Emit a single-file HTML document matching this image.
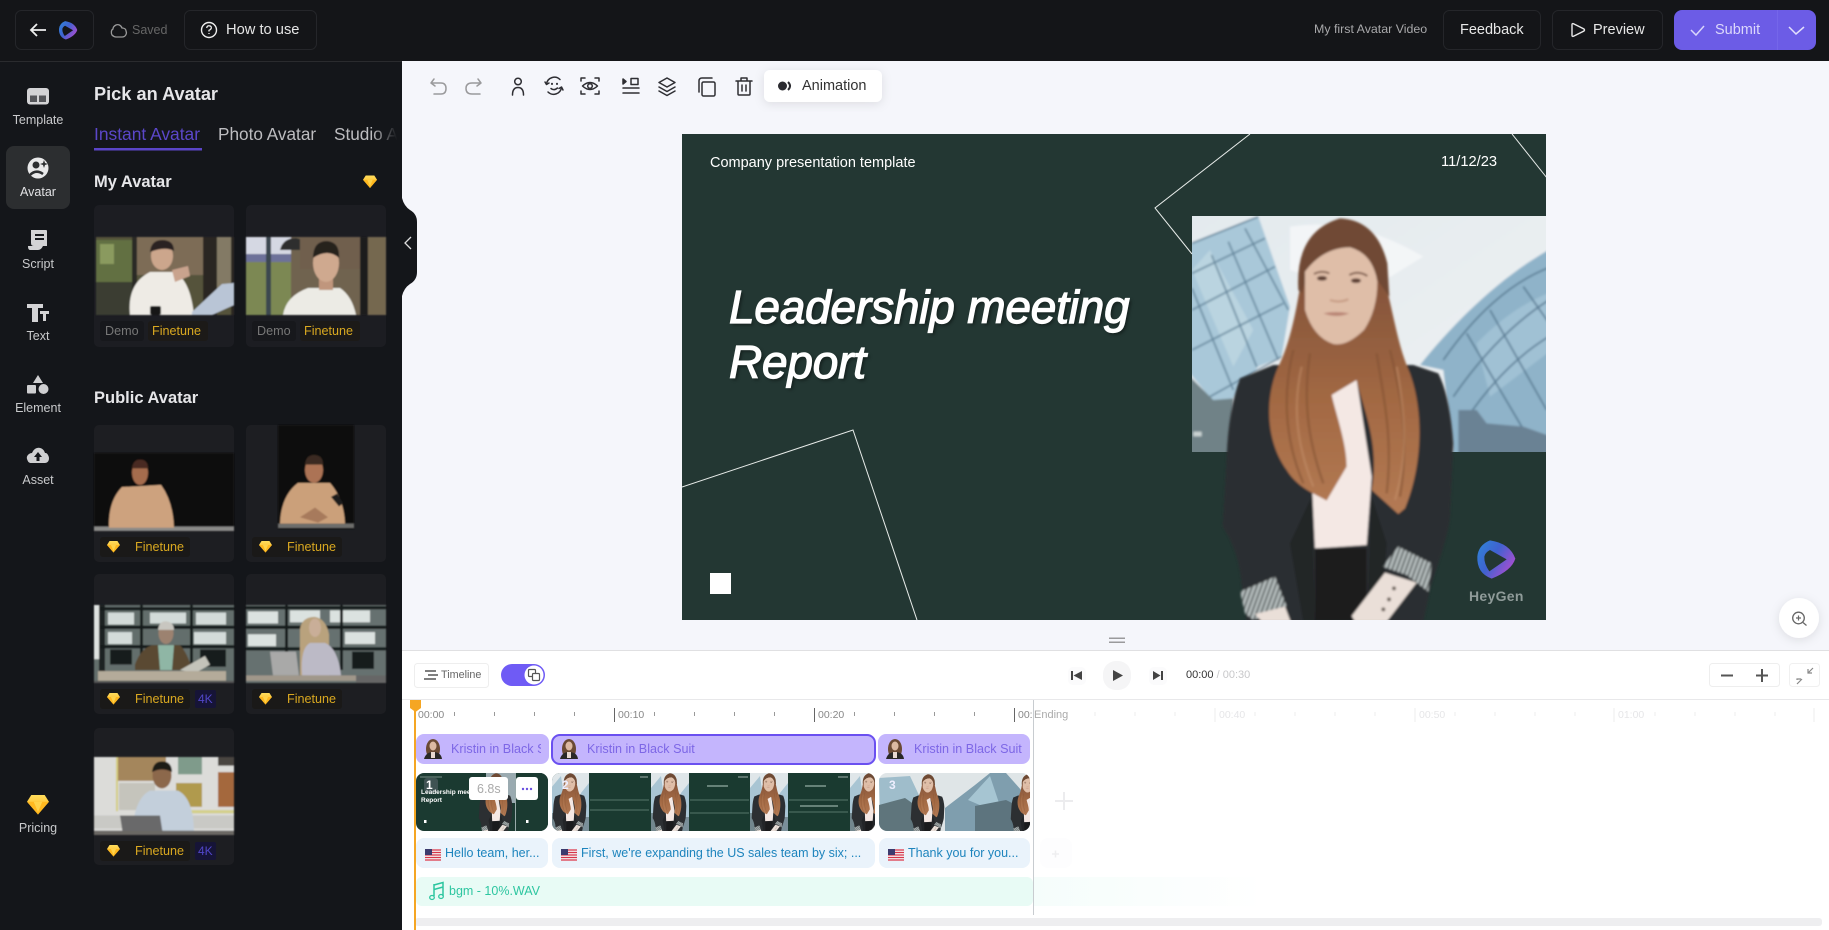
<!DOCTYPE html>
<html lang="en"><head><meta charset="utf-8"><title>Avatar Video Editor</title>
<style>
html,body{margin:0;padding:0;width:1829px;height:930px;overflow:hidden;background:#fff}
body{position:relative;font-family:"Liberation Sans",Arial,sans-serif}
svg.bg{position:absolute;left:0;top:0}
.t{position:absolute;white-space:nowrap;line-height:20px;height:20px}
.nav{width:76px;left:0;text-align:center;font-size:12.5px;color:#c9cacc}
.fin{font-size:12.6px;color:#d9a820}
.h{font-weight:700;color:#e6e6e9;font-size:16.5px}
.kr{font-size:12.6px;color:#7d67e6}
.sc{font-size:12.5px;color:#1d84bd}
.rl{font-size:10.5px;color:#888}
.rf{font-size:10.5px;color:#e6e6e8}
</style></head><body>
<svg class="bg" width="1829" height="930" viewBox="0 0 1829 930" xmlns="http://www.w3.org/2000/svg">
<defs>
<linearGradient id="lg" x1="0" y1="0" x2="1" y2=".6"><stop offset="0" stop-color="#2f86d8"/><stop offset=".5" stop-color="#3f62d0"/><stop offset="1" stop-color="#a64fd0"/></linearGradient>
<linearGradient id="hr" x1="0" y1="0" x2="0" y2="1"><stop offset="0" stop-color="#83533a"/><stop offset=".55" stop-color="#a46a44"/><stop offset="1" stop-color="#b37a54"/></linearGradient>
<linearGradient id="sky" x1="0" y1="0" x2="1" y2="1"><stop offset="0" stop-color="#e3eaee"/><stop offset="1" stop-color="#eef1f3"/></linearGradient>
<linearGradient id="gt" x1="0" y1="0" x2="0" y2="1"><stop offset="0" stop-color="#ffdd5c"/><stop offset="1" stop-color="#ffad14"/></linearGradient>
<linearGradient id="bgf" x1="0" y1="0" x2="1" y2="0"><stop offset="0" stop-color="#f5fdfb"/><stop offset="1" stop-color="#ffffff"/></linearGradient>
<filter id="b" x="-5%" y="-5%" width="110%" height="110%"><feGaussianBlur stdDeviation="0.9"/></filter>
<filter id="b3" x="-5%" y="-5%" width="110%" height="110%"><feGaussianBlur stdDeviation="3"/></filter>
<filter id="sh" x="-30%" y="-30%" width="160%" height="160%"><feDropShadow dx="0" dy="2" stdDeviation="5" flood-color="#000" flood-opacity=".1"/></filter>
<g id="gem"><path d="M3.5 0H14.5L18 5.5L9 16L0 5.5Z" fill="url(#gt)"/><path d="M0 5.5H18L9 16Z" fill="#ffb81f"/><path d="M5.5 5.5H12.5L9 14Z" fill="#ffd34a"/></g>
<g id="logo"><path fill-rule="evenodd" fill="url(#lg)" d="M900 991Q960 1000 976 1046Q965 1082 905 1106Q860 1090 862 1040Q865 1005 900 991ZM900 1020L950 1048L898 1084Q882 1062 883 1040Q885 1028 900 1020Z"/></g>
<pattern id="st" width="13" height="10" patternUnits="userSpaceOnUse" patternTransform="rotate(20)"><rect width="13" height="10" fill="#bcc4c4"/><rect width="5" height="10" fill="#4a4f50"/></pattern>
<g id="kw">
 <path d="M250 465L150 505Q115 600 110 740L98 950Q150 1030 155 1130L170 1235H700L722 1130Q780 960 780 920L790 700Q780 560 745 490L670 465Z" fill="#2c2f32"/>
 <path d="M430 520L500 510L545 800L530 1005L375 1015L365 800Z" fill="#f4e8e4"/>
 <path d="M375 1015H530V1235H375Z" fill="#1a1b1d"/>
 <path d="M365 860L375 1235H340L300 1000Z" fill="#232528"/><path d="M545 860L530 1235H570L590 1000Z" fill="#232528"/>
 <path d="M335 200C320 300 300 400 265 470C225 560 225 690 290 780C320 830 370 850 410 872L470 770C470 700 440 620 425 555L500 510C520 600 570 700 545 840L625 912L645 895C700 760 700 600 660 490C620 400 610 300 580 200Z" fill="url(#hr)"/>
 <g fill="none" stroke="#7d4e30" stroke-width="7" opacity=".55">
  <path d="M310 420C280 540 280 680 340 820M360 430C340 560 350 680 400 820M600 420C630 540 660 680 630 860M560 430C580 560 610 680 590 850"/>
 </g>
 <g fill="none" stroke="#c99670" stroke-width="6" opacity=".5">
  <path d="M335 470C310 580 315 690 370 830M620 470C640 590 660 720 615 870"/>
 </g>
 <path d="M325 240Q315 65 450 25Q560 30 592 160L598 260L562 210Q540 130 480 112Q420 115 360 170L335 250Z" fill="#6f4a34"/>
 <path d="M345 185Q400 112 480 112Q548 130 562 215Q562 300 522 360Q470 410 430 402Q370 382 345 300Z" fill="#dfbea8"/>
 <path d="M372 192Q395 180 418 190" stroke="#6a4634" stroke-width="5" fill="none"/><path d="M478 195Q505 180 532 198" stroke="#6a4634" stroke-width="5" fill="none"/>
 <ellipse cx="396" cy="205" rx="15" ry="7" fill="#5b3d30"/><ellipse cx="498" cy="212" rx="15" ry="7" fill="#5b3d30"/>
 <path d="M420 270Q445 280 475 268" stroke="#c59a82" stroke-width="6" fill="none"/>
 <path d="M400 310Q437 303 478 310Q440 325 400 310Z" fill="#b98474"/>
 <path d="M578 1070L625 1010L725 1060L715 1145L650 1095Z" fill="url(#st)"/>
 <path d="M150 1145L255 1100L290 1190L190 1230L165 1210Z" fill="url(#st)"/>
 <path d="M485 1218L585 1088L680 1118L590 1235H495Z" fill="#eadfd8"/>
 <path d="M195 1212L285 1190L302 1235H215Z" fill="#eadfd8"/>
 <circle cx="612" cy="1135" r="6" fill="#6b6058"/><circle cx="597" cy="1168" r="6" fill="#6b6058"/><circle cx="580" cy="1198" r="6" fill="#6b6058"/>
</g>
<g id="wf"><rect width="38" height="58" fill="#dfe6e9"/><path d="M0 15L10 3L14 30L0 45Z" fill="#a9c5d3"/><path d="M38 10V45L26 40L30 20Z" fill="#aac6d5"/><rect y="40" width="10" height="18" fill="#73878e"/><rect x="30" y="44" width="8" height="14" fill="#7a8f99"/><use href="#kw" transform="translate(-3 -1) scale(.0485)"/></g>
<clipPath id="c1"><rect x="416" y="773" width="132" height="58" rx="8"/></clipPath>
<clipPath id="c2"><rect x="552" y="773" width="323" height="58" rx="8"/></clipPath>
<clipPath id="c3"><rect x="879" y="773" width="151" height="58" rx="8"/></clipPath>
<clipPath id="ph"><rect x="6" y="18" width="1065" height="708"/></clipPath>
<clipPath id="sl"><rect x="682" y="134" width="864" height="486"/></clipPath>
</defs>

<!-- frame -->
<rect width="1829" height="930" fill="#fff"/>
<rect x="402" y="61" width="1427" height="589" fill="#f5f6fb"/>
<rect width="1829" height="61" fill="#141518"/>
<rect y="61" width="402" height="869" fill="#14161a"/>
<rect y="61" width="402" height="1" fill="#2a2b2e"/>

<!-- header -->
<rect x="15.500" y="10.500" width="78" height="39" rx="6" fill="none" stroke="#25262a"/>
<path d="M46 30H31M37 24L31 30L37 36" fill="none" stroke="#eee" stroke-width="1.800"/>
<use href="#logo" transform="translate(59 21) scale(.16) translate(-862 -990)"/>
<path d="M116 37H122C126 37 127 33 126 31C126 29 124 28 122 28C121 25 118 24 116 25C114 26 113 27 113 29C111 30 111 33 112 35C113 36 114 37 116 37Z" fill="none" stroke="#999" stroke-width="1.300"/>
<rect x="184.500" y="10.500" width="132" height="39" rx="6" fill="none" stroke="#25262a"/>
<circle cx="209" cy="30" r="7.500" fill="none" stroke="#eee" stroke-width="1.400"/>
<path d="M206.700 28Q207 25.500 209.300 25.800Q211.500 26 211.300 28Q211 29.500 209 30.300V31.500M209 33V34" fill="none" stroke="#eee" stroke-width="1.300"/>
<rect x="1443.500" y="10.500" width="97" height="39" rx="6" fill="none" stroke="#25262a"/>
<rect x="1552.500" y="10.500" width="110" height="39" rx="6" fill="none" stroke="#25262a"/>
<path d="M1572 24.500Q1572 23 1574 24L1584 29Q1585 30 1584 31L1574 36Q1572 37 1572 35.500Z" fill="none" stroke="#e8e8e8" stroke-width="1.400"/>
<rect x="1674" y="10" width="142" height="40" rx="8" fill="#6c5ce6"/>
<rect x="1777" y="10" width="1" height="40" fill="#7566ea"/>
<path d="M1691 30L1696 35L1704 26" fill="none" stroke="#d9d5fb" stroke-width="1.500"/>
<path d="M1789 27L1796 34L1804 27" fill="none" stroke="#e2dffc" stroke-width="1.500"/>

<!-- left nav -->
<rect x="27" y="88" width="22" height="16.500" rx="3" fill="#d3d3d5"/><rect x="30" y="95.500" width="7" height="6.500" fill="#55565a"/><rect x="39" y="95.500" width="7" height="6.500" fill="#55565a"/>
<rect x="6" y="146" width="64" height="63" rx="8" fill="#2c2e30"/>
<circle cx="38" cy="168" r="10.500" fill="#e9e9ea"/><circle cx="36" cy="165" r="3.500" fill="#2c2e30"/><path d="M30 175Q36 169 43 174" fill="none" stroke="#2c2e30" stroke-width="2.500"/><path d="M44 160L45 163L48 164L45 165L44 168L43 165L40 164L43 163Z" fill="#2c2e30"/>
<path d="M31 230H46Q47 230 47 231V246H34Q31 246 31 243Z" fill="#d3d3d5"/><rect x="35" y="234" width="9" height="2" fill="#14161a"/><rect x="35" y="238" width="9" height="2" fill="#14161a"/><path d="M28 246H43Q41 250 38 250H30Q28 250 28 246Z" fill="#d3d3d5"/>
<path d="M27 304H43V308H38V322H32V308H27Z" fill="#d3d3d5"/><path d="M40 311H49V314H46V321H43V314H40Z" fill="#d3d3d5"/>
<path d="M38 375L43 383H33Z" fill="#cfcfd1"/><rect x="27" y="385" width="9" height="8.500" rx="1" fill="#cfcfd1"/><circle cx="43.500" cy="389" r="5" fill="#cfcfd1"/>
<g transform="translate(0 8)"><path d="M31 455H45C49 455 50 450 48 447C47 445 46 445 45 445C44 441 40 439 37 440C34 441 33 443 32 445C29 445 26 448 27 451C28 454 29 455 31 455Z" fill="#cfcfd1"/><path d="M38 444L42 449H39.500V453H36.500V449H34Z" fill="#14161a"/></g>
<use href="#gem" transform="translate(27 795) scale(1.220)"/>

<!-- sidebar tabs -->
<rect x="94" y="148" width="108" height="2.500" fill="#5b45c8"/>
<use href="#gem" transform="translate(363 175.500) scale(.78)"/>

<!-- my avatar cards -->
<rect x="94" y="205" width="140" height="142" rx="5" fill="#1c1d22"/><rect x="246" y="205" width="140" height="142" rx="5" fill="#1c1d22"/>
<rect x="100" y="321" width="44" height="20" rx="3" fill="#17181c"/><rect x="148" y="321" width="60" height="20" rx="3" fill="#1c1a18"/>
<rect x="252" y="321" width="44" height="20" rx="3" fill="#17181c"/><rect x="300" y="321" width="60" height="20" rx="3" fill="#1c1a18"/>
<g filter="url(#b)">
 <svg x="96" y="237" width="138" height="78" viewBox="96 237 138 78">
  <rect x="96" y="237" width="138" height="78" fill="#54533b"/>
  <rect x="96" y="240" width="36" height="42" fill="#626f42"/><rect x="100" y="244" width="14" height="20" fill="#8a9a5e"/><rect x="96" y="282" width="36" height="33" fill="#3a3d32"/>
  <rect x="132" y="237" width="5" height="78" fill="#2a2a25"/><rect x="137" y="237" width="66" height="38" fill="#7d6c56"/>
  <rect x="203" y="237" width="14" height="78" fill="#2a2823"/><rect x="217" y="237" width="14" height="60" fill="#837a65"/><rect x="231" y="237" width="3" height="78" fill="#2a2823"/>
  <path d="M130 315C128 295 134 280 150 272L175 272C188 280 192 298 194 315Z" fill="#eeebe5"/>
  <ellipse cx="162" cy="256" rx="11" ry="14" fill="#cca68c"/><path d="M150 252Q151 240 162 240Q174 240 174 251Q165 246 150 252Z" fill="#2a2420"/>
  <path d="M172 270L188 266L190 276L175 282Z" fill="#c9a38d"/>
  <path d="M192 312L222 284L234 283V305L212 315H192Z" fill="#b9c5d6"/><rect x="150" y="306" width="11" height="9" rx="2" fill="#141414"/>
 </svg>
 <svg x="246" y="237" width="140" height="78" viewBox="246 237 140 78">
  <rect x="246" y="237" width="140" height="78" fill="#6f6350"/>
  <rect x="246" y="237" width="45" height="24" fill="#d5d8e3"/><rect x="246" y="254" width="45" height="10" fill="#6d7199"/><rect x="246" y="262" width="45" height="53" fill="#7c8852"/>
  <rect x="266" y="237" width="5" height="78" fill="#3b4650"/><path d="M280 250Q283 238 296 238Q306 240 310 250Z" fill="#2f2f2e"/>
  <rect x="300" y="237" width="60" height="32" fill="#6f5e4d"/><rect x="360" y="237" width="8" height="78" fill="#1f1f1f"/><rect x="368" y="237" width="18" height="78" fill="#746850"/>
  <path d="M283 315Q286 296 308 288L340 288Q352 296 356 315Z" fill="#ecebe5"/>
  <rect x="319" y="276" width="14" height="14" fill="#c0967d"/>
  <ellipse cx="326" cy="263" rx="13" ry="19" fill="#cfa98f"/><path d="M313 258Q313 241 327 241Q340 242 339 258Q328 248 313 258Z" fill="#28221f"/>
 </svg>
</g>

<!-- public cards -->
<rect x="94" y="425" width="140" height="137" rx="5" fill="#1d1e22"/><rect x="246" y="425" width="140" height="137" rx="5" fill="#1d1e22"/>
<rect x="94" y="574" width="140" height="140" rx="5" fill="#1d1e22"/><rect x="246" y="574" width="140" height="140" rx="5" fill="#1d1e22"/>
<rect x="94" y="728" width="140" height="137" rx="5" fill="#1d1e22"/>
<g fill="#1a1918">
<rect x="100" y="537" width="90" height="20" rx="3"/><rect x="252" y="537" width="90" height="20" rx="3"/><rect x="100" y="689" width="90" height="20" rx="3"/><rect x="252" y="689" width="90" height="20" rx="3"/><rect x="100" y="841" width="90" height="20" rx="3"/>
</g>
<g filter="url(#b)">
 <svg x="94" y="453" width="140" height="78" viewBox="94 446 140 71" preserveAspectRatio="none">
 <rect x="94" y="446" width="140" height="71" fill="#09090a"/>
 <rect x="94" y="513" width="140" height="4" fill="#8a8a88"/>
 <path d="M109 514Q108 490 122 477L161 475Q173 490 174 514Z" fill="#cda27e"/>
 <ellipse cx="140" cy="464" rx="8" ry="11" fill="#a56c4e"/><path d="M132 460Q133 452 140 452Q148 452 148 460Z" fill="#4a2c20"/>
 </svg>
 <svg x="278" y="425" width="76" height="104" viewBox="278 419 76 97" preserveAspectRatio="none">
 <rect x="278" y="419" width="76" height="97" fill="#0b0b0c"/>
 <rect x="278" y="511" width="76" height="4" fill="#6e6e6c"/>
 <path d="M280 511Q281 485 298 473L330 473Q344 488 345 511Z" fill="#cba07a"/><path d="M300 505L315 496L328 505L318 510Z" fill="#a77a5c"/>
 <ellipse cx="314" cy="461" rx="9" ry="12" fill="#ac7355"/><path d="M305 456Q306 447 314 447Q323 447 323 456Z" fill="#3a2a22"/>
 <path d="M331 486L337 483L343 492L339 495Z" fill="#1b1b1b"/>
 </svg>
 <!-- bookcase 1 -->
 <svg x="94" y="605" width="140" height="78" viewBox="94 585 140 72" preserveAspectRatio="none">
  <rect x="94" y="585" width="140" height="72" fill="#646e6c"/>
  <rect x="94" y="585" width="5" height="50" fill="#dfe3e1"/><rect x="99" y="585" width="6" height="62" fill="#1d2220"/>
  <g fill="#d3dbd9"><rect x="108" y="592" width="26" height="11"/><rect x="150" y="592" width="36" height="10"/><rect x="196" y="592" width="30" height="11"/><rect x="108" y="610" width="24" height="11"/><rect x="194" y="610" width="32" height="11"/></g>
  <g fill="#161c1e"><rect x="99" y="604" width="135" height="3"/><rect x="99" y="622" width="135" height="3"/><rect x="99" y="587" width="135" height="3"/><rect x="140" y="585" width="3" height="55"/><rect x="190" y="585" width="3" height="55"/><rect x="110" y="626" width="22" height="14"/><rect x="200" y="626" width="26" height="16"/></g>
  <path d="M135 640Q140 626 152 622L180 622Q188 630 192 645H135Z" fill="#5a4a33"/><path d="M158 622H174L172 645H160Z" fill="#8fb6a5"/>
  <ellipse cx="166" cy="611" rx="7.500" ry="10" fill="#9c8270"/><path d="M158 608Q159 600 166 600Q174 601 174 608Z" fill="#c8c6c0"/>
  <path d="M180 645L205 632L210 640L195 648Z" fill="#c3c3ba"/>
  <rect x="98" y="646" width="128" height="9" fill="#b4ab9a"/><rect x="94" y="655" width="140" height="2" fill="#555"/>
 </svg>
 <svg x="246" y="605" width="140" height="78" viewBox="246 585 140 72" preserveAspectRatio="none">
  <rect x="246" y="585" width="140" height="72" fill="#667170"/>
  <g fill="#dbe2e0"><rect x="248" y="591" width="30" height="11"/><rect x="290" y="590" width="30" height="11"/><rect x="330" y="590" width="40" height="11"/><rect x="248" y="612" width="28" height="11"/><rect x="345" y="610" width="30" height="11"/></g>
  <g fill="#161c1e"><rect x="246" y="586" width="140" height="3"/><rect x="246" y="604" width="140" height="3"/><rect x="246" y="624" width="140" height="3"/><rect x="285" y="585" width="3" height="60"/><rect x="340" y="585" width="3" height="60"/><rect x="352" y="628" width="22" height="16"/></g>
  <path d="M300 650V607Q302 596 315 596Q326 598 329 612V650Z" fill="#b9a27d"/>
  <path d="M302 650Q300 625 310 620L325 620Q338 625 341 650Z" fill="#bcbac6"/><ellipse cx="315" cy="606" rx="6" ry="8.500" fill="#c9ae98"/>
  <path d="M270 628H296L299 650H273Z" fill="#a9a9a8"/>
  <rect x="246" y="650" width="110" height="5" fill="#a0978a"/><rect x="356" y="650" width="30" height="7" fill="#666"/>
 </svg>
 <svg x="94" y="757" width="140" height="78" viewBox="94 724 140 72" preserveAspectRatio="none">
  <rect x="94" y="724" width="140" height="72" fill="#dcdcd9"/>
  <rect x="116" y="724" width="50" height="22" fill="#a4865c"/><rect x="116" y="724" width="2" height="50" fill="#d5cd80"/>
  <rect x="119" y="748" width="36" height="25" fill="#c5c4bc"/><rect x="178" y="724" width="24" height="16" fill="#7f9b8b"/><rect x="176" y="748" width="26" height="22" fill="#b09a4d"/>
  <rect x="218" y="724" width="16" height="8" fill="#4a4440"/><rect x="218" y="738" width="16" height="32" fill="#a4673e"/>
  <rect x="94" y="778" width="140" height="12" fill="#c9c9c5"/><rect x="150" y="773" width="84" height="3" fill="#d3cf8a"/>
  <path d="M132 796Q134 762 150 755L178 755Q194 762 194 796Z" fill="#c3cfdb"/>
  <ellipse cx="162" cy="741" rx="9.500" ry="12" fill="#8c674b"/><path d="M152 738Q153 728 162 728Q172 728 172 738Q162 733 152 738Z" fill="#1e1a18"/>
  <path d="M120 778H160L163 796H123Z" fill="#69696b"/>
  <rect x="94" y="792" width="140" height="4" fill="#6a6864"/>
 </svg>
</g>
<g>
<use href="#gem" transform="translate(107 541) scale(.72)"/><use href="#gem" transform="translate(259 541) scale(.72)"/>
<use href="#gem" transform="translate(107 693) scale(.72)"/><use href="#gem" transform="translate(259 693) scale(.72)"/>
<use href="#gem" transform="translate(107 845) scale(.72)"/>
<rect x="195" y="690" width="21" height="18" rx="2" fill="#161437"/><rect x="195" y="842" width="21" height="18" rx="2" fill="#161437"/>
</g>

<!-- collapse tab -->
<path d="M402 198Q404 206 410 210Q417 214 417 222V272Q417 280 410 284Q404 288 402 296Z" fill="#14161a"/>
<path d="M411 237L405 243L411 249" fill="none" stroke="#ddd" stroke-width="1.300"/>

<!-- toolbar -->
<g fill="none" stroke-width="1.500" stroke-linecap="round" stroke-linejoin="round">
 <g stroke="#9a9a9c">
  <path d="M434 79L431 83L435 86M431 83H441Q446 83 446 88.500Q446 94 441 94H434"/>
  <path d="M478 79L481 83L477 86M481 83H472Q466 83 466 88.500Q466 94 472 94H480"/>
 </g>
 <g stroke="#2e2e33">
  <circle cx="518" cy="81.500" r="3.300"/><path d="M512.500 95Q512.500 87.500 518 87.500Q523.500 87.500 523.500 95"/>
  <path d="M546.500 84A8 8 0 0 1 560 79.500"/><path d="M561.500 87.500A8 8 0 0 1 548 92"/><path d="M545 82L546.500 84.500L549 83M563 90L561.500 87L559 88.500"/>
  <path d="M551 88.500Q554 91 557.500 88"/><path d="M552 83.800V84M557 83.800V84" stroke-width="2"/>
  <path d="M581 81V78H585M595 78H599V81M599 91V94H595M585 94H581V91"/><path d="M582.500 86Q590 79 597.500 86Q590 93 582.500 86Z"/><circle cx="590" cy="86" r="2.300"/>
  <path d="M623 79L626 81.500L623 84Z" fill="#2e2e33"/><rect x="631" y="78.500" width="7" height="6"/><path d="M623 88H639M623 93H639"/>
  <path d="M667 78L675 82.500L667 87L659 82.500Z"/><path d="M659 87L667 91.500L675 87M659 91L667 95.500L675 91"/>
  <rect x="702" y="82" width="13" height="14" rx="1.500"/><path d="M699 92V81Q699 78 702 78H712"/>
  <path d="M736 81H752M741 81V78H747V81M738 81V94Q738 95 739 95H749Q750 95 750 94V81M742 85V91M746 85V91"/>
 </g>
</g>
<rect x="764" y="70" width="118" height="32" rx="6" fill="#fff" filter="url(#sh)"/>
<circle cx="782.500" cy="86" r="4.500" fill="#2b2b30"/><path d="M788 82Q792 86 788 90" fill="none" stroke="#2b2b30" stroke-width="2"/>

<!-- slide -->
<rect x="682" y="134" width="864" height="486" fill="#233733"/>
<g clip-path="url(#sl)">
 <g transform="translate(1190 210) scale(.33333)">
  <g clip-path="url(#ph)"><g filter="url(#b3)">
  <rect x="0" y="10" width="1085" height="725" fill="url(#sky)"/>
  <path d="M300 50Q500 20 700 140L520 250L300 180Z" fill="#f6f8f9" opacity=".8"/>
  <path d="M0 100L205 20L300 290L275 440L205 470L130 565L70 575L0 490Z" fill="#a9c8d9"/>
  <path d="M6 180L60 120L190 360L130 470Z" fill="#c2d8e3" opacity=".7"/>
  <g stroke="#5a7d93" stroke-width="5" fill="none" opacity=".85">
   <path d="M65 135L200 470M115 95L265 450M165 55L295 300M6 235L130 540M6 100L205 20M6 190L225 85M6 300L255 170M6 420L280 280M60 560L275 440"/>
  </g>
  <path d="M0 500L70 570L130 565L125 740H0Z" fill="#6f8287"/>
  <rect x="10" y="665" width="25" height="14" fill="#c9d2d2"/>
  <path d="M690 465C790 340 930 200 1085 115V740H790L760 480Z" fill="#8fb3c9"/>
  <path d="M860 400C940 320 1000 280 1085 245V420L900 560Z" fill="#a7c8d9" opacity=".7"/>
  <g stroke="#4f7189" stroke-width="5" fill="none" opacity=".85">
   <path d="M760 450C850 320 960 215 1085 170M790 560C880 430 980 330 1085 265M820 640C900 520 990 430 1085 375M900 300L1070 600M830 370L1040 726M1000 230L1085 350"/>
  </g>
  <path d="M805 740V600L860 600L890 640L1000 650L1085 680V740Z" fill="#6b8294"/>
  </g></g>
  <g filter="url(#b3)"><use href="#kw"/></g>
  <use href="#logo"/>
 </g>
 <g fill="none" stroke="#e8ecea" stroke-width="1">
  <path d="M1250 134L1155 208L1192 254"/>
  <path d="M1512 134L1547 178"/>
  <path d="M682 487L853 430L917 620"/>
 </g>
 <rect x="710" y="573" width="21" height="21" fill="#fff"/>
</g>

<!-- bottom panel -->
<rect x="402" y="650" width="1427" height="280" fill="#fff"/>
<rect x="402" y="650" width="1427" height="1" fill="#e0e0e2"/>
<rect x="402" y="699" width="1427" height="1" fill="#e8e8ea"/>
<rect x="1109" y="637.500" width="16" height="1.500" fill="#9a9a9c"/><rect x="1109" y="641.500" width="16" height="1.500" fill="#9a9a9c"/>
<circle cx="1799" cy="618" r="20" fill="#fff" filter="url(#sh)"/>
<circle cx="1798.500" cy="618" r="5.800" fill="none" stroke="#666" stroke-width="1.300"/><path d="M1803 622.500L1806.500 625.500M1796 618H1801M1798.500 615.500V620.500" stroke="#666" stroke-width="1.200" fill="none"/>

<rect x="414.500" y="663.500" width="74" height="24" rx="3" fill="#fff" stroke="#eee"/>
<path d="M425 671H436M428 675H438M424 679H436" stroke="#555" stroke-width="1.500"/>
<rect x="501" y="664" width="44" height="22" rx="11" fill="#6f5bf5"/><circle cx="534" cy="675" r="9.500" fill="#fff"/>
<rect x="528.500" y="669.500" width="7" height="7" rx="1" fill="none" stroke="#555" stroke-width="1.200"/><rect x="532.500" y="673.500" width="7" height="7" rx="1" fill="#fff" stroke="#555" stroke-width="1.200"/>

<rect x="1103" y="661" width="28" height="29" rx="13" fill="#f5f5f6"/>
<rect x="1068" y="667" width="18" height="18" rx="5" fill="#fbfbfc"/><rect x="1149" y="667" width="18" height="18" rx="5" fill="#fbfbfc"/>
<path d="M1071 671V680H1073V671ZM1082 671L1073.500 675.500L1082 680Z" fill="#444"/>
<path d="M1113 670V681L1123 675.500Z" fill="#444"/>
<path d="M1163 671V680H1161V671ZM1153 671L1160.500 675.500L1153 680Z" fill="#444"/>
<rect x="1709.500" y="663.500" width="70" height="23" rx="3" fill="#fff" stroke="#eee"/>
<path d="M1721 675.500H1733M1756 675.500H1768M1762 669V682" stroke="#555" stroke-width="2" fill="none"/>
<rect x="1789.500" y="663.500" width="30" height="23" rx="3" fill="#fff" stroke="#f0f0f0"/>
<path d="M1813 668L1808 673M1808 669V673H1812M1797 684L1802 679M1797 680V679H1801" stroke="#888" stroke-width="1.200" fill="none"/>

<!-- ruler -->
<g stroke="#999" stroke-width="1">
 <path d="M454.500 712V716M494.500 712V716M534.500 712V716M574.500 712V716M654.500 712V716M694.500 712V716M734.500 712V716M774.500 712V716M854.500 712V716M894.500 712V716M934.500 712V716M974.500 712V716"/>
</g>
<path d="M614.500 708V722M814.500 708V722M1014.500 708V722" stroke="#666" stroke-width="1"/>
<g stroke="#ececee" stroke-width="1">
 <path d="M1095 712V716M1135 712V716M1175 712V716M1255 712V716M1295 712V716M1335 712V716M1375 712V716M1455 712V716M1495 712V716M1535 712V716M1575 712V716M1655 712V716M1695 712V716M1735 712V716M1775 712V716"/>
 <path d="M1215 708V722M1415 708V722M1614 708V722M1814 708V722"/>
</g>
<rect x="1033" y="700" width="1" height="215" fill="#c8ccd0"/>

<!-- avatar clips -->
<rect x="416" y="734" width="133" height="30" rx="8" fill="#c4b5fd"/>
<rect x="552" y="735" width="323" height="29" rx="8" fill="#c4b5fd" stroke="#6a50f0" stroke-width="2"/>
<rect x="878" y="734" width="152" height="30" rx="8" fill="#c4b5fd"/>
<g id="mini"><ellipse cx="433" cy="749" rx="7" ry="10" fill="#6b4a34"/><path d="M424 759Q426 752 433 752Q441 752 442 759Z" fill="#2a2827"/><ellipse cx="433" cy="746" rx="3.500" ry="4.500" fill="#dcb9a2"/><rect x="431" y="752" width="4" height="6" fill="#e8d8d0"/></g>
<use href="#mini" x="136"/><use href="#mini" x="462"/>

<!-- video clips -->
<g clip-path="url(#c1)">
 <rect x="416" y="773" width="132" height="58" fill="#1b3a31"/>
 <rect x="486" y="773" width="29" height="30" fill="#9aaab0"/>
 <use href="#kw" transform="translate(474 772) scale(.0485)"/>
 <rect x="515" y="773" width="1" height="58" fill="#9aa" />
 <rect x="516" y="773" width="32" height="58" fill="#1b3a31"/>
 <path d="M420 777H442" stroke="#7a8d88"/>
 <rect x="424" y="778" width="14" height="14" rx="3" fill="#3f5353"/>
 <rect x="424" y="820" width="2.500" height="3" fill="#fff"/><rect x="526" y="820" width="2.500" height="3" fill="#fff"/>
</g>
<g clip-path="url(#c2)">
 <rect x="552" y="773" width="323" height="58" fill="#1a3a30"/>
 <use href="#wf" x="551" y="773"/><use href="#wf" x="651" y="773"/><use href="#wf" x="750" y="773"/><use href="#wf" x="850" y="773"/>
 <g stroke="#56766a" stroke-width="1" fill="none">
  <path d="M590 800H649M590 810H649M690 800H749M690 813H749M789 800H848M789 812H848"/>
  <path d="M640 777H648M738 777H748M838 777H848" stroke="#a0b0aa"/>
 </g>
 <path d="M707 786H728M805 786H826M800 806H838" stroke="#7f9a8f" stroke-width="1.500"/>
</g>
<g clip-path="url(#c3)">
 <rect x="879" y="773" width="151" height="58" fill="#dfe5e7"/>
 <path d="M879 778L910 776L925 808L905 800L880 812Z" fill="#9fbdcb"/>
 <path d="M879 805L905 798L925 812L925 831H879Z" fill="#5f757c"/>
 <path d="M945 831V808L975 785L990 773H1006L1030 800V831Z" fill="#7f9eae"/>
 <path d="M968 800L990 776L1003 815Z" fill="#a6c5d2"/><path d="M975 831V806L1006 800L1030 812V831Z" fill="#5d747e"/>
 <use href="#kw" transform="translate(906 773) scale(.0485)"/><use href="#kw" transform="translate(1006 773) scale(.0485)"/>
</g>
<rect x="469" y="777" width="39" height="23" rx="3" fill="#fff"/>
<rect x="516" y="777" width="22" height="23" rx="3" fill="#fff"/>
<circle cx="523" cy="789" r="1.200" fill="#6a50e0"/><circle cx="527" cy="789" r="1.200" fill="#6a50e0"/><circle cx="531" cy="789" r="1.200" fill="#6a50e0"/>

<!-- script -->
<rect x="416" y="838" width="132" height="30" rx="8" fill="#eaf3fb"/><rect x="552" y="838" width="323" height="30" rx="8" fill="#eaf3fb"/><rect x="879" y="838" width="151" height="30" rx="8" fill="#eaf3fb"/>
<g id="fl"><rect x="425" y="849" width="16" height="12" fill="#f4f4f4"/><path d="M425 850H441M425 852.500H441M425 855H441M425 857.500H441M425 860H441" stroke="#d6354a" stroke-width="1.300"/><rect x="425" y="849" width="7" height="6" fill="#3c3b6e"/></g>
<use href="#fl" x="136"/><use href="#fl" x="463"/>

<rect x="1040" y="838" width="32" height="30" rx="8" fill="#fdfdfe"/>
<path d="M1064 792V810M1055 801H1073" stroke="#ececee" stroke-width="2"/>
<path d="M1052 854H1059M1055.500 850.500V857.500" stroke="#eeeef0" stroke-width="1.500"/>

<!-- bgm -->
<rect x="416" y="877" width="617" height="29" rx="6" fill="#e8fbf5"/>
<rect x="1034" y="877" width="230" height="29" fill="url(#bgf)"/>
<path d="M434 884L434 896M443 883V896M434 885L443 882.500V887L434 889.500" stroke="#2dc6a0" stroke-width="1.500" fill="none"/>
<ellipse cx="432" cy="897.500" rx="2.300" ry="2" fill="none" stroke="#2dc6a0" stroke-width="1.300"/><ellipse cx="441" cy="896.500" rx="2.300" ry="2" fill="none" stroke="#2dc6a0" stroke-width="1.300"/>

<!-- scrollbar -->
<rect x="415" y="918" width="1407" height="8" rx="3" fill="#eeeef0"/>

<!-- playhead -->
<rect x="414" y="700" width="2" height="230" fill="#f5a623"/>
<path d="M410 700H421V708L415.500 712L410 708Z" fill="#f5a623"/>
</svg>

<!-- header text -->
<div class="t" style="left:132px;top:20px;font-size:12.500px;color:#666">Saved</div>
<div class="t" style="left:226px;top:20px;font-size:14.700px;color:#e6e6e6">How to use</div>
<div class="t" style="left:1314px;top:19px;font-size:12.400px;color:#a8a8aa">My first Avatar Video</div>
<div class="t" style="left:1460px;top:20px;font-size:14.500px;color:#e8e8e8">Feedback</div>
<div class="t" style="left:1593px;top:20px;font-size:14.500px;color:#e8e8e8">Preview</div>
<div class="t" style="left:1715px;top:20px;font-size:14.500px;color:#dcd8fb">Submit</div>

<!-- nav text -->
<div class="t nav" style="top:110px">Template</div>
<div class="t nav" style="top:182px;color:#e2e2e4">Avatar</div>
<div class="t nav" style="top:254px">Script</div>
<div class="t nav" style="top:326px">Text</div>
<div class="t nav" style="top:398px">Element</div>
<div class="t nav" style="top:470px">Asset</div>
<div class="t nav" style="top:818px">Pricing</div>

<!-- sidebar text -->
<div class="t h" style="left:94px;top:84px;font-size:18.200px">Pick an Avatar</div>
<div class="t" style="left:94px;top:124px;font-size:17.400px;color:#5b47c9">Instant Avatar</div>
<div class="t" style="left:218px;top:124px;font-size:17.200px;color:#bdbdc0">Photo Avatar</div>
<div class="t" style="left:334px;top:124px;width:63px;overflow:hidden;font-size:17.200px;color:#bdbdc0">Studio Avatar</div>
<div style="position:absolute;left:372px;top:124px;width:25px;height:20px;background:linear-gradient(90deg,rgba(20,22,26,0),#14161a)"></div>
<div class="t h" style="left:94px;top:172px">My Avatar</div>
<div class="t" style="left:105px;top:321px;font-size:12.600px;color:#777">Demo</div>
<div class="t fin" style="left:152px;top:321px">Finetune</div>
<div class="t" style="left:257px;top:321px;font-size:12.600px;color:#777">Demo</div>
<div class="t fin" style="left:304px;top:321px">Finetune</div>
<div class="t h" style="left:94px;top:388px">Public Avatar</div>
<div class="t fin" style="left:135px;top:537px">Finetune</div>
<div class="t fin" style="left:287px;top:537px">Finetune</div>
<div class="t fin" style="left:135px;top:689px">Finetune</div>
<div class="t fin" style="left:287px;top:689px">Finetune</div>
<div class="t fin" style="left:135px;top:841px">Finetune</div>
<div class="t" style="left:198px;top:689px;font-size:12px;color:#5146c8">4K</div>
<div class="t" style="left:198px;top:841px;font-size:12px;color:#5146c8">4K</div>

<!-- toolbar text -->
<div class="t" style="left:802px;top:76px;font-size:14.500px;color:#333">Animation</div>

<!-- slide text -->
<div class="t" style="left:710px;top:153px;font-size:14.500px;color:#fff">Company presentation template</div>
<div class="t" style="left:1441px;top:152px;font-size:14.700px;color:#fff">11/12/23</div>
<div style="position:absolute;left:729px;top:280px;font:italic 46px/55px 'Liberation Sans',Arial,sans-serif;letter-spacing:-.2px;color:#fff;-webkit-text-stroke:1.200px #fff;text-shadow:2px 2px 3px rgba(0,0,0,.45);white-space:nowrap">Leadership meeting<br>Report</div>
<div class="t" style="left:1469px;top:586px;font-size:14px;font-weight:700;color:#8f9b99;letter-spacing:.3px">HeyGen</div>

<!-- timeline text -->
<div class="t" style="left:441px;top:665px;font-size:10.800px;color:#666">Timeline</div>
<div class="t" style="left:1186px;top:665px;font-size:11px;color:#333">00:00 <span style="color:#c8c8ca">/ 00:30</span></div>
<div class="t rl" style="left:418px;top:705px">00:00</div>
<div class="t rl" style="left:618px;top:705px">00:10</div>
<div class="t rl" style="left:818px;top:705px">00:20</div>
<div class="t rl" style="left:1018px;top:705px;width:14px;overflow:hidden">00:30</div>
<div class="t" style="left:1034px;top:705px;font-size:11px;color:#aaa">Ending</div>
<div class="t rf" style="left:1219px;top:705px">00:40</div>
<div class="t rf" style="left:1419px;top:705px">00:50</div>
<div class="t rf" style="left:1618px;top:705px">01:00</div>

<div class="t kr" style="left:451px;top:739px;width:90px;overflow:hidden">Kristin in Black Suit</div>
<div class="t kr" style="left:587px;top:739px">Kristin in Black Suit</div>
<div class="t kr" style="left:914px;top:739px">Kristin in Black Suit</div>

<div class="t" style="left:426px;top:775px;font-size:12px;font-weight:700;color:#fff">1</div>
<div class="t" style="left:562px;top:775px;font-size:12px;font-weight:700;color:#eef">2</div>
<div class="t" style="left:889px;top:775px;font-size:12px;font-weight:700;color:#eef">3</div>
<div style="position:absolute;left:421px;top:789px;font:700 6.500px/8px 'Liberation Sans',Arial,sans-serif;color:#fff;white-space:nowrap">Leadership meeting<br>Report</div>
<div class="t" style="left:477px;top:779px;font-size:12.500px;color:#aaa">6.8s</div>

<div class="t sc" style="left:445px;top:843px">Hello team, her...</div>
<div class="t sc" style="left:581px;top:843px">First, we're expanding the US sales team by six; ...</div>
<div class="t sc" style="left:908px;top:843px">Thank you for you...</div>
<div class="t" style="left:449px;top:881px;font-size:12.500px;color:#2dc6a0">bgm - 10%.WAV</div>
</body></html>
